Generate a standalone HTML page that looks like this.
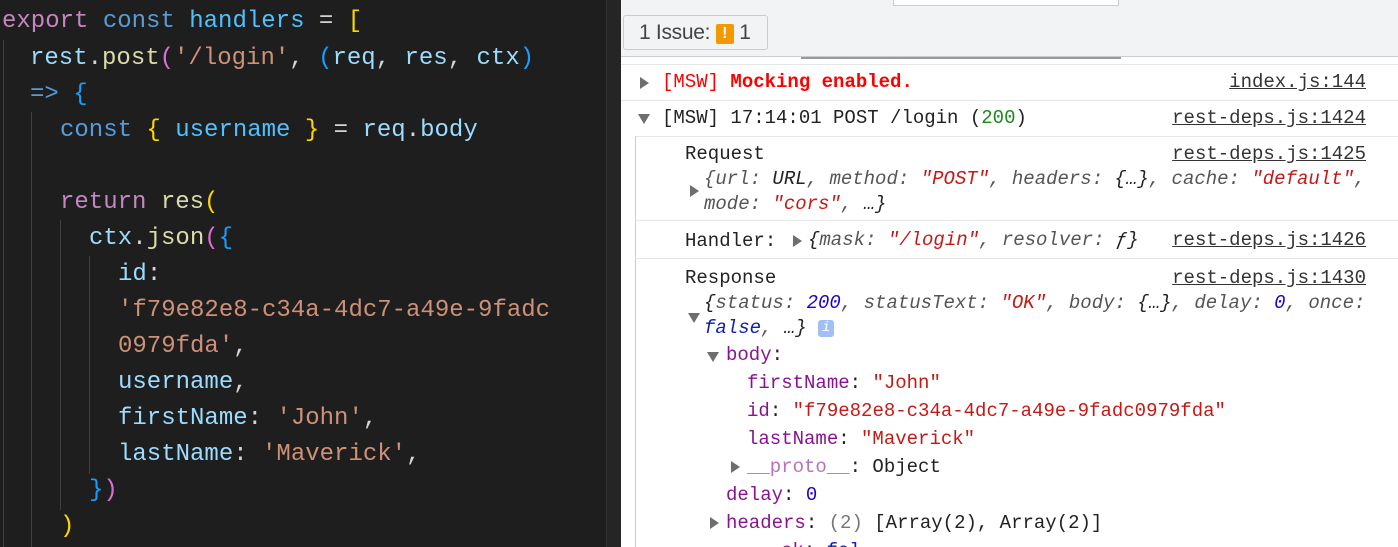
<!DOCTYPE html>
<html><head><meta charset="utf-8"><style>
*{margin:0;padding:0;box-sizing:border-box}
html,body{width:1398px;height:547px;overflow:hidden}
body{position:relative;background:#fff}
#ed{position:absolute;left:0;top:0;width:606px;height:547px;background:#1e1e1e;font-family:"Liberation Mono",monospace;font-size:24px;color:#d4d4d4;overflow:hidden}
#sep{position:absolute;left:606px;top:0;width:15px;height:547px;background:#252526;border-left:1px solid #333}
.l{position:absolute;left:2px;white-space:pre;height:36px;line-height:36px}
.g{position:absolute;width:1px;background:#404040}
.kw{color:#c586c0}.st{color:#569cd6}.vr{color:#4fc1ff}.pr{color:#9cdcfe}.fn{color:#dcdcaa}.s{color:#ce9178}
.b1{color:#ffd700}.b2{color:#da70d6}.b3{color:#179fff}
#dt{position:absolute;left:621px;top:0;width:777px;height:547px;background:#fff;font-family:"Liberation Mono",monospace;font-size:19px;color:#222;overflow:hidden}
.r{position:absolute;white-space:pre;line-height:25px}
.hl{position:absolute;left:0;width:777px;height:1px;background:#e6e6e6}
.lk{position:absolute;right:32px;white-space:pre;text-decoration:underline;color:#333;line-height:25px}
.tr{position:absolute;width:0;height:0;border-top:6px solid transparent;border-bottom:6px solid transparent;border-left:9px solid #6e6e6e}
.td{position:absolute;width:0;height:0;border-left:6px solid transparent;border-right:6px solid transparent;border-top:10px solid #6e6e6e}
.k{color:#881391}.v{color:#c41a16}.n{color:#1c00cf}.i{font-style:italic;color:#555}
</style></head><body>
<div id="ed">
<div class="g" style="left:3px;top:40px;height:507px"></div>
<div class="g" style="left:31px;top:112px;height:435px"></div>
<div class="g" style="left:60px;top:220px;height:290px"></div>
<div class="g" style="left:89px;top:256px;height:218px"></div>
<div class="l" style="top:4px"><span class="kw">export</span> <span class="st">const</span> <span class="vr">handlers</span> = <span class="b1">[</span></div>
<div class="l" style="top:41px;left:30px"><span class="pr">rest</span>.<span class="fn">post</span><span class="b2">(</span><span class="s">'/login'</span>, <span class="b3">(</span><span class="pr">req</span>, <span class="pr">res</span>, <span class="pr">ctx</span><span class="b3">)</span></div>
<div class="l" style="top:77px;left:30px"><span class="st">=&gt;</span> <span class="b3">{</span></div>
<div class="l" style="top:113px;left:60px"><span class="st">const</span> <span class="b1">{</span> <span class="vr">username</span> <span class="b1">}</span> = <span class="pr">req</span>.<span class="pr">body</span></div>
<div class="l" style="top:185px;left:60px"><span class="kw">return</span> <span class="fn">res</span><span class="b1">(</span></div>
<div class="l" style="top:221px;left:89px"><span class="pr">ctx</span>.<span class="fn">json</span><span class="b2">(</span><span class="b3">{</span></div>
<div class="l" style="top:257px;left:118px"><span class="pr">id</span>:</div>
<div class="l" style="top:293px;left:118px"><span class="s">'f79e82e8-c34a-4dc7-a49e-9fadc</span></div>
<div class="l" style="top:329px;left:118px"><span class="s">0979fda'</span>,</div>
<div class="l" style="top:365px;left:118px"><span class="pr">username</span>,</div>
<div class="l" style="top:401px;left:118px"><span class="pr">firstName</span>: <span class="s">'John'</span>,</div>
<div class="l" style="top:437px;left:118px"><span class="pr">lastName</span>: <span class="s">'Maverick'</span>,</div>
<div class="l" style="top:473px;left:89px"><span class="b3">}</span><span class="b2">)</span></div>
<div class="l" style="top:509px;left:60px"><span class="b1">)</span></div>
</div>
<div id="sep"></div>
<div id="dt">
<div style="position:absolute;left:0;top:0;width:777px;height:57px;background:#f1f3f4;border-bottom:1px solid #cacdd1"></div>
<div style="position:absolute;left:272px;top:0;width:226px;height:6px;background:#fff;border:1px solid #ccc;border-top:none"></div>
<div style="position:absolute;left:2px;top:15px;width:145px;height:35px;border:1px solid #ccc;border-radius:3px;background:#f1f3f4;font-family:'Liberation Sans',sans-serif;font-size:21px;color:#444;line-height:34px;padding-left:15px;white-space:nowrap;letter-spacing:-0.3px">1 Issue: <span style="display:inline-block;width:18px;height:20px;background:#f29900;border-radius:2px;color:#fff;font-weight:bold;font-size:16px;line-height:20px;text-align:center;vertical-align:1px">!</span> 1</div>
<div style="position:absolute;left:180px;top:57px;width:320px;height:2px;background:#999"></div>
<div class="hl" style="top:64px"></div>
<div class="tr" style="left:19px;top:77px"></div>
<div class="r" style="left:41px;top:70px;color:#f00">[MSW] <b>Mocking enabled.</b></div>
<div class="lk" style="top:70px">index.js:144</div>
<div class="hl" style="top:100px"></div>
<div class="td" style="left:17px;top:114px"></div>
<div class="r" style="left:41px;top:106px">[MSW] 17:14:01 POST /login (<span style="color:#1a8a1a">200</span>)</div>
<div class="lk" style="top:106px">rest-deps.js:1424</div>
<div class="hl" style="top:136px;left:14px;width:763px"></div>
<div style="position:absolute;left:14px;top:136px;width:1px;height:411px;background:#ccc"></div>
<div class="r" style="left:64px;top:142px">Request</div>
<div class="lk" style="top:142px">rest-deps.js:1425</div>
<div class="tr" style="left:69px;top:185px"></div>
<div class="r i" style="left:83px;top:167px">{url: <span style="color:#222">URL</span>, method: <span class="v">"POST"</span>, headers: <span style="color:#222">{…}</span>, cache: <span class="v">"default"</span>,</div>
<div class="r i" style="left:83px;top:192px">mode: <span class="v">"cors"</span>, <span style="color:#222">…}</span></div>
<div class="hl" style="top:220px;left:14px;width:763px"></div>
<div class="r" style="left:64px;top:229px">Handler: </div>
<div class="tr" style="left:172px;top:235px"></div>
<div class="r i" style="left:187px;top:228px"><span style="color:#222">{</span>mask: <span class="v">"/login"</span>, resolver: <span style="color:#222">ƒ}</span></div>
<div class="lk" style="top:228px">rest-deps.js:1426</div>
<div class="hl" style="top:258px;left:14px;width:763px"></div>
<div class="r" style="left:64px;top:266px">Response</div>
<div class="lk" style="top:266px">rest-deps.js:1430</div>
<div class="td" style="left:67px;top:313px"></div>
<div class="r i" style="left:83px;top:291px"><span style="color:#222">{</span>status: <span class="n">200</span>, statusText: <span class="v">"OK"</span>, body: <span style="color:#222">{…}</span>, delay: <span class="n">0</span>, once:</div>
<div class="r i" style="left:83px;top:316px"><span style="color:#0d22aa">false</span>, <span style="color:#222">…}</span> <span style="display:inline-block;width:16px;height:17px;background:#9fbff5;border-radius:3px;color:#fff;font-size:14px;line-height:17px;text-align:center;vertical-align:2px">i</span></div>
<div class="td" style="left:86px;top:352px"></div>
<div class="r" style="left:105px;top:343px"><span class="k">body</span>:</div>
<div class="r" style="left:126px;top:371px"><span class="k">firstName</span>: <span class="v">"John"</span></div>
<div class="r" style="left:126px;top:399px"><span class="k">id</span>: <span class="v">"f79e82e8-c34a-4dc7-a49e-9fadc0979fda"</span></div>
<div class="r" style="left:126px;top:427px"><span class="k">lastName</span>: <span class="v">"Maverick"</span></div>
<div class="tr" style="left:110px;top:461px"></div>
<div class="r" style="left:126px;top:455px"><span style="color:#b871bc">__proto__</span>: Object</div>
<div class="r" style="left:105px;top:483px"><span class="k">delay</span>: <span class="n">0</span></div>
<div class="tr" style="left:89px;top:517px"></div>
<div class="r" style="left:105px;top:511px"><span class="k">headers</span>: <span style="color:#777">(2)</span> [Array(2), Array(2)]</div>
<div class="r" style="left:160px;top:539px"><span class="k">ok</span>: <span style="color:#0d22aa">fal</span></div>
</div>
</body></html>
